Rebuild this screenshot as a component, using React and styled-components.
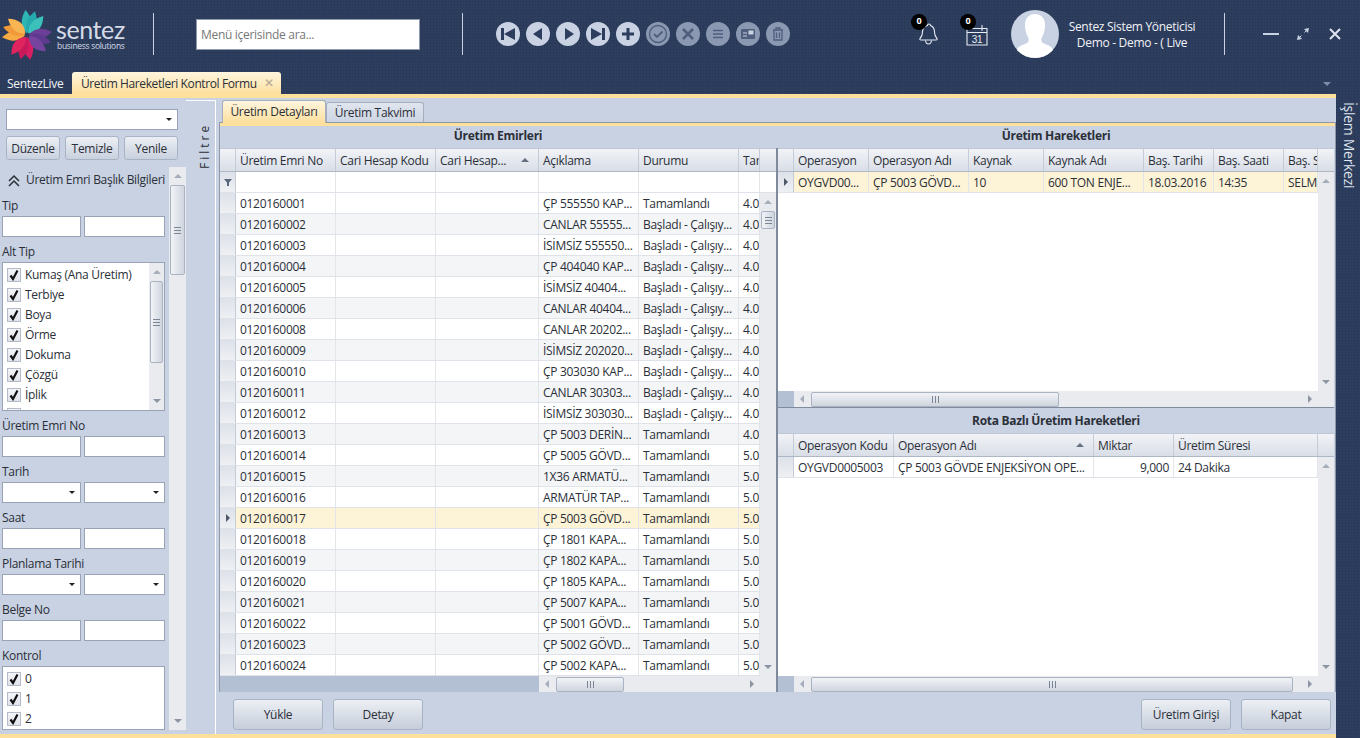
import React from 'react'
import styled, { createGlobalStyle } from 'styled-components'

const GlobalStyle = createGlobalStyle`
  html, body { margin: 0; padding: 0; background: #2d3d5e; }
  * { box-sizing: border-box; }
  body { font-family: "Open Sans", "Noto Sans", sans-serif; font-size: 12px; color: #2b2f38; letter-spacing: -0.3px; }
`

const Page = styled.div`
  width: 1360px;
  height: 738px;
  overflow: hidden;
  display: flex;
  flex-direction: column;
  background-color: #2d3d5e;
  background-image: radial-gradient(#26344f 1px, transparent 1px);
  background-size: 3px 3px;
`

const TopBar = styled.div`
  height: 72px;
  padding-bottom: 4px;
  display: flex;
  align-items: center;
  color: #fff;
`
const LogoBox = styled.div`
  width: 153px;
  padding-left: 2px;
  display: flex;
  align-items: center;
`
const LogoText = styled.div`
  margin-left: 3px;
  color: #d5dbe6;
  line-height: 1;
`
const LogoName = styled.div`
  font-family: "Lato", sans-serif;
  font-size: 25px;
  font-weight: 400;
  letter-spacing: -0.4px;
  line-height: 24px;
`
const LogoSub = styled.div`
  font-size: 8.5px;
  letter-spacing: -0.3px;
  line-height: 10px;
  margin-left: 1px;
`
const Divider = styled.div`
  width: 1px;
  height: 42px;
  background: #c8d2e3;
`
const Search = styled.input`
  width: 224px;
  height: 31px;
  margin: 0 42px;
  border: 1px solid #8e99ad;
  background: #fff;
  padding: 0 4px;
  font: inherit;
  letter-spacing: inherit;
  &::placeholder { color: #777; opacity: 1; }
`
const NavGroup = styled.div`
  display: flex;
  gap: 6px;
  margin-left: 33px;
`
const NavBtn = styled.button`
  width: 24px;
  height: 24px;
  padding: 0;
  border: 0;
  border-radius: 50%;
  background: ${p => (p.$dim ? '#8b98b2' : '#c8d2e3')};
  svg { display: block; }
`
const Notify = styled.div`
  position: relative;
  width: 24px;
  height: 28px;
  margin-left: ${p => p.$gap}px;
`
const Badge = styled.span`
  position: absolute;
  left: -5px;
  top: -6px;
  width: 16px;
  height: 16px;
  border-radius: 50%;
  background: #000;
  color: #fff;
  font-size: 9px;
  font-weight: 700;
  line-height: 14px;
  text-align: center;
  letter-spacing: 0;
`
const Avatar = styled.div`
  width: 48px;
  height: 48px;
  margin-left: 22px;
  border-radius: 50%;
  overflow: hidden;
  background: #c8d2e3;
  flex: none;
`
const UserInfo = styled.div`
  width: 130px;
  margin-left: 8px;
  margin-right: 27px;
  margin-top: 2px;
  text-align: center;
  line-height: 16px;
  color: #f0f2f6;
  white-space: nowrap;
`
const WinBtn = styled.div`
  width: 32px;
  height: 24px;
  display: flex;
  align-items: center;
  justify-content: center;
  margin-left: ${p => p.$left || 0}px;
`

const TabStrip = styled.div`
  height: 22px;
  display: flex;
  align-items: stretch;
  padding-left: 7px;
  padding-right: 29px;
`
const AppTab = styled.div`
  line-height: 24px;
  color: #f2f4f8;
  width: 56px;
  white-space: nowrap;
`
const ActiveAppTab = styled.div`
  line-height: 24px;
  width: 209px;
  margin-left: 9px;
  padding: 0 7px 0 9px;
  display: flex;
  justify-content: space-between;
  white-space: nowrap;
  letter-spacing: -0.4px;
  border-radius: 3px 3px 0 0;
  background: linear-gradient(#fff6df, #fddf9d);
`
const TabClose = styled.span`
  color: #b3a68e;
  font-size: 12px;
  line-height: 22px;
`
const StripMenu = styled.span`
  margin-left: auto;
  align-self: center;
  margin-top: 2px;
  border-left: 4px solid transparent;
  border-right: 4px solid transparent;
  border-top: 4px solid #7f8ca8;
`

const Body = styled.div`
  height: 644px;
  display: flex;
`
const Workspace = styled.div`
  width: 1336px;
  display: flex;
  background: #c8d2e3;
  border-top: 4px solid #fde09c;
  border-bottom: 4px solid #fde09c;
`
const SideRail = styled.div`
  flex: 1;
  writing-mode: vertical-rl;
  padding-top: 8px;
  padding-right: 1px;
  font-size: 14px;
  line-height: 20px;
  color: #dfe4ee;
`

const FilterPanel = styled.div`
  width: 186px;
  flex: none;
  display: flex;
  flex-direction: column;
`
const FilterTop = styled.div`
  padding: 11px 8px 0 6px;
`
const Combo = styled.div`
  height: ${p => p.$h || 21}px;
  display: flex;
  align-items: center;
  justify-content: flex-end;
  padding-right: 5px;
  background: #fff;
  border: 1px solid #98a3b5;
`
const Caret = styled.span`
  border-left: 3px solid transparent;
  border-right: 3px solid transparent;
  border-top: 3px solid #222;
`
const FilterButtons = styled.div`
  display: grid;
  grid-template-columns: 54px 54px 54px;
  justify-content: space-between;
  margin-top: 6px;
`
const SmallBtn = styled.button`
  height: 24px;
  padding: 0;
  font: inherit;
  letter-spacing: inherit;
  color: #2b2f38;
  border: 1px solid #a8b3c5;
  border-radius: 3px;
  background: linear-gradient(#eceff4, #c9d1de);
`
const FormPane = styled.div`
  height: 563px;
  margin-top: 7px;
  display: flex;
`
const FormCol = styled.div`
  width: 169px;
  padding: 0 4px 0 2px;
  overflow: hidden;
`
const Expander = styled.div`
  height: 24px;
  padding: 5px 0 0 5px;
  line-height: 16px;
  display: flex;
  gap: 5px;
  white-space: nowrap;
`
const ExpanderIcon = styled.svg`
  flex: none;
  margin-top: 2px;
`
const Label = styled.div`
  height: 25px;
  padding-top: 7px;
  line-height: 16px;
`
const Pair = styled.div`
  display: grid;
  grid-template-columns: 79px 81px;
  gap: 3px;
`
const TextBox = styled.div`
  height: 21px;
  background: #fff;
  border: 1px solid #98a3b5;
`
const ListBox = styled.div`
  height: ${p => p.$h}px;
  display: flex;
  background: #fff;
  border: 1px solid #98a3b5;
  overflow: hidden;
`
const ListItems = styled.div`
  flex: 1;
  padding: 1px 0 0 4px;
`
const CheckRow = styled.div`
  height: 20px;
  display: flex;
  align-items: center;
  gap: 4px;
  padding-top: 1px;
  line-height: 20px;
`
const CheckBox = styled.span`
  width: 14px;
  height: 14px;
  flex: none;
  background: linear-gradient(#f4f5f8, #dfe3ea);
  border: 1px solid #b5bcc9;
  svg { display: block; }
`

const FiltreBar = styled.div`
  width: 30px;
  flex: none;
  margin-top: 2px;
  border-top: 1px solid #fff;
  border-right: 1px solid #fff;
`
const FiltreText = styled.div`
  writing-mode: vertical-rl;
  transform: rotate(180deg);
  letter-spacing: 3px;
  font-size: 12px;
  line-height: 14px;
  padding-bottom: 19px;
  padding-right: 3px;
  height: 68px;
  margin-left: auto;
  margin-right: 3px;
  color: #2b2f38;
`

const MainArea = styled.div`
  flex: 1;
  min-width: 0;
  padding-left: 3px;
  padding-top: 2px;
  display: flex;
  flex-direction: column;
`
const FormTabs = styled.div`
  height: 22px;
  display: flex;
  align-items: flex-end;
  padding-left: 3px;
`
const FormTab = styled.div`
  height: ${p => (p.$active ? 23 : 20)}px;
  width: ${p => p.$w}px;
  text-align: center;
  line-height: ${p => (p.$active ? '21px' : '19px')};
  margin-bottom: ${p => (p.$active ? '-1px' : '0')};
  position: relative;
  border: 1px solid #a4aebf;
  border-bottom: 0;
  border-radius: 3px 3px 0 0;
  background: ${p => (p.$active ? 'linear-gradient(#fff6df, #fddf9d)' : 'linear-gradient(#e0e5ee, #cdd5e3)')};
`
const TabPanel = styled.div`
  height: 570px;
  display: flex;
  border: 1px solid #8e97a6;
  border-bottom: 0;
  background: #c8d2e3;
  box-shadow: inset 0 3px 0 #fde09c;
  padding-top: 3px;
`
const Pane = styled.div`
  width: ${p => p.$w}px;
  flex: none;
  display: flex;
  flex-direction: column;
`
const Split = styled.div`
  height: 1px;
  background: #7f8a9c;
  flex: none;
`
const Title = styled.div`
  height: ${p => p.$h}px;
  flex: none;
  background: #c8d2e3;
  text-align: center;
  font-weight: 700;
  font-size: 12px;
  line-height: ${p => p.$line}px;
`
const Gutter = styled.div`
  width: 2px;
  flex: none;
  margin-top: 22px;
  background: #7f8a9c;
`
const HeadRow = styled.div`
  height: 24px;
  flex: none;
  display: grid;
  grid-template-columns: ${p => p.$cols} 16px;
  background: linear-gradient(#f1f3f7, #d9dee7);
  border-top: 1px solid #c0c8d6;
  border-bottom: 1px solid #aeb7c6;
`
const HeadCell = styled.div`
  display: flex;
  align-items: center;
  justify-content: space-between;
  padding: 0 0 0 4px;
  border-right: 1px solid #c5ccd8;
  overflow: hidden;
  white-space: nowrap;
  min-width: 0;
`
const SortUp = styled.span`
  flex: none;
  margin-right: 9px;
  border-left: 4px solid transparent;
  border-right: 4px solid transparent;
  border-bottom: 4px solid #66707f;
`
const DataRow = styled.div`
  height: 21px;
  display: grid;
  grid-template-columns: ${p => p.$cols};
  background: ${p => (p.$sel ? '#fdf3d6' : p.$alt ? '#f4f5f7' : '#fff')};
  border-bottom: 1px solid #dfe3e9;
`
const FilterRow = styled(DataRow)`
  flex: none;
  grid-template-columns: ${p => p.$cols} 16px;
`
const RowHead = styled.div`
  display: flex;
  align-items: center;
  justify-content: center;
  background: linear-gradient(#dde1e9, #eef0f3);
  border-right: 1px solid #c5ccd8;
`
const RowMark = styled.span`
  border-top: 4px solid transparent;
  border-bottom: 4px solid transparent;
  border-left: 4px solid #4f5968;
`
const Cell = styled.div`
  padding: 1px 4px 0;
  line-height: 20px;
  overflow: hidden;
  white-space: nowrap;
  text-align: ${p => (p.$right ? 'right' : 'left')};
  border-right: 1px solid #e2e5ea;
  min-width: 0;
`
const GridBody = styled.div`
  flex: ${p => (p.$h ? 'none' : 1)};
  height: ${p => (p.$h ? `${p.$h}px` : 'auto')};
  display: flex;
  overflow: hidden;
  background: #fff;
`
const Rows = styled.div`
  flex: 1;
  min-width: 0;
`

const VBar = styled.div`
  width: ${p => p.$w || 16}px;
  flex: none;
  display: flex;
  flex-direction: column;
  align-items: center;
  background: #e9ebef;
  padding: 0 1px;
`
const ArrowSlot = styled.div`
  height: 18px;
  width: 100%;
  flex: none;
  display: flex;
  align-items: center;
  justify-content: center;
  margin-top: ${p => (p.$end ? 'auto' : 0)};
`
const ArrowUp = styled.span`
  border-left: 4px solid transparent;
  border-right: 4px solid transparent;
  border-bottom: 4px solid #a6aebb;
`
const ArrowDown = styled.span`
  border-left: 4px solid transparent;
  border-right: 4px solid transparent;
  border-top: 4px solid #8d95a3;
`
const VThumb = styled.div`
  width: 100%;
  height: ${p => p.$size}px;
  display: flex;
  align-items: center;
  justify-content: center;
  border: 1px solid #aab3c2;
  border-radius: 2px;
  background: linear-gradient(90deg, #f1f3f6, #cfd5df);
`
const VGrip = styled.span`
  width: 7px;
  height: 7px;
  background: repeating-linear-gradient(#7c8593 0 1px, transparent 1px 3px);
`
const HBarRow = styled.div`
  height: 16px;
  flex: none;
  display: flex;
`
const HBarBlank = styled.div`
  width: ${p => p.$w}px;
  flex: none;
  background: #b3bfd2;
`
const HBar = styled.div`
  flex: 1;
  min-width: 0;
  display: flex;
  align-items: center;
  background: #e9ebef;
  padding-right: ${p => p.$pad}px;
`
const ArrowCell = styled.div`
  width: 16px;
  flex: none;
  display: flex;
  justify-content: center;
  margin-left: ${p => (p.$end ? 'auto' : 0)};
`
const ArrowLeft = styled.span`
  border-top: 4px solid transparent;
  border-bottom: 4px solid transparent;
  border-right: 4px solid #a6aebb;
`
const ArrowRight = styled.span`
  border-top: 4px solid transparent;
  border-bottom: 4px solid transparent;
  border-left: 4px solid #8d95a3;
`
const HThumb = styled.div`
  width: ${p => p.$size}px;
  height: 15px;
  margin-left: 1px;
  display: flex;
  align-items: center;
  justify-content: center;
  border: 1px solid #aab3c2;
  border-radius: 2px;
  background: linear-gradient(#f1f3f6, #cfd5df);
`
const HGrip = styled.span`
  width: 7px;
  height: 7px;
  background: repeating-linear-gradient(90deg, #7c8593 0 1px, transparent 1px 3px);
`

const Footer = styled.div`
  flex: 1;
  display: flex;
  align-items: flex-start;
  padding: 7px 5px 0 14px;
  gap: 10px;
`
const FootBtn = styled.button`
  width: 90px;
  height: 31px;
  padding: 0;
  font: inherit;
  letter-spacing: inherit;
  color: #2b2f38;
  border: 1px solid #a8b3c5;
  border-radius: 3px;
  background: linear-gradient(#eceff4, #c6cedb);
  margin-left: ${p => (p.$push ? 'auto' : 0)};
`

const Logo = () => (
  <svg width="51" height="52" viewBox="0 0 51 52">
    <g transform="translate(25 27)">
      {[
        [-8, '#2fb6b4'], [14, '#25a9ad'], [36, '#3cc0bb'],
        [-100, '#f6ab45'], [-76, '#f09a3a'], [-54, '#f8b551'],
        [168, '#d81e62'], [190, '#c8195a'], [214, '#e0245f'],
        [78, '#6b3f98'], [102, '#5e3a8e'], [126, '#74449f'],
      ].map(([a, c]) => (
        <path key={a} d="M0 -2 C-5 -9 -5 -16 2 -25 C8 -16 8 -9 0 -2Z" fill={c} transform={`rotate(${a})`} />
      ))}
    </g>
  </svg>
)

const NavIcon = ({ name, dim }) => {
  const c = dim ? '#4f5e7d' : '#2d3d5e'
  return (
    <svg width="24" height="24" viewBox="0 0 24 24" fill={c} stroke="none">
      {name === 'first' && <><rect x="5" y="6" width="3" height="12" /><path d="M19 6 8 12l11 6z" /></>}
      {name === 'prev' && <path d="M16 6 7 12l9 6z" />}
      {name === 'play' && <path d="M9 6l9 6-9 6z" />}
      {name === 'next' && <><path d="M5 6l11 6-11 6z" /><rect x="16" y="6" width="3" height="12" /></>}
      {name === 'plus' && <path d="M10.5 6h3v4.5H18v3h-4.5V18h-3v-4.5H6v-3h4.5z" />}
      {name === 'check' && (
        <g fill="none" stroke={c} strokeWidth="1.4">
          <circle cx="12" cy="12" r="8.5" />
          <path d="M8 12l3 3 5.5-5.5" strokeWidth="1.8" />
        </g>
      )}
      {name === 'close' && <path d="M7 7l10 10M17 7 7 17" stroke={c} strokeWidth="2.6" />}
      {name === 'menu' && <path d="M7 8.5h10M7 12h10M7 15.5h10" stroke={c} strokeWidth="1.6" />}
      {name === 'card' && (
        <>
          <rect x="5" y="7" width="14" height="10" rx="1" />
          <rect x="12.5" y="8.5" width="5" height="4" fill="#c8d2e3" />
          <path d="M7 11h4M7 14h4" stroke="#c8d2e3" strokeWidth="1" />
        </>
      )}
      {name === 'trash' && (
        <g fill="none" stroke={c} strokeWidth="1.3">
          <path d="M7 8h10M10 8V6h4v2M8 8v10h8V8M10.5 10.5v5.5M13.5 10.5v5.5" />
        </g>
      )}
    </svg>
  )
}

const Bell = () => (
  <svg width="24" height="28" viewBox="0 0 24 28" fill="none" stroke="#e8ecf3" strokeWidth="1.1">
    <path d="M13 4c1 0 1.500.6 1.500 1.500 2.500 1 4 3.500 4 6.500 0 3 .5 4.500 2.500 6.500.6.8 0 1.500-1 1.500H5c-1 0-1.600-.7-1-1.500 2-2 2.500-3.500 2.500-6.500 0-3 1.500-5.500 5-6.500C11.500 4.600 12 4 13 4z" />
    <path d="M9.500 20.500c.3 2.500 1.700 3.500 3 3.500s2.700-1 3-3.500" />
  </svg>
)

const Calendar = () => (
  <svg width="24" height="28" viewBox="0 0 24 28" fill="none" stroke="#e8ecf3" strokeWidth="1.1">
    <path d="M2 8.500h20V25H2zM2 12.500h20M17 5v6" />
    <text x="12" y="23" textAnchor="middle" fontSize="10" fill="#e8ecf3" stroke="none" fontFamily="Liberation Sans">31</text>
  </svg>
)

const Silhouette = () => (
  <svg width="48" height="48" viewBox="0 0 48 48">
    <path d="M24 4c6 0 10 4 10 11 0 5-1 9-3 12-1 2-1 5 1 6 4 2 9 3 10 7l1 8H5l1-8c1-4 6-5 10-7 2-1 2-4 1-6-2-3-3-7-3-12 0-7 4-11 10-11z" fill="#fff" />
  </svg>
)

const Check = () => (
  <svg width="12" height="12" viewBox="0 0 12 12">
    <path d="M2.500 6.500 5 10l4.500-8.500" fill="none" stroke="#111" strokeWidth="2.200" />
  </svg>
)

const Funnel = () => (
  <svg width="8" height="8" viewBox="0 0 8 8"><path d="M0 1h8L5 4.500V8H3V4.500z" fill="#59677d" /></svg>
)

const Chevrons = () => (
  <ExpanderIcon width="14" height="14" viewBox="0 0 14 14" fill="none" stroke="#2b2f38" strokeWidth="1.500">
    <path d="M2 7l5-5 5 5M2 12l5-5 5 5" />
  </ExpanderIcon>
)

const VScroll = ({ w, size }) => (
  <VBar $w={w}>
    <ArrowSlot><ArrowUp /></ArrowSlot>
    {size && <VThumb $size={size}><VGrip /></VThumb>}
    <ArrowSlot $end><ArrowDown /></ArrowSlot>
  </VBar>
)

const HScroll = ({ blank, size, pad }) => (
  <HBarRow>
    <HBarBlank $w={blank} />
    <HBar $pad={pad}>
      <ArrowCell><ArrowLeft /></ArrowCell>
      <HThumb $size={size}><HGrip /></HThumb>
      <ArrowCell $end><ArrowRight /></ArrowCell>
    </HBar>
  </HBarRow>
)

const GridHead = ({ cols, items, sort }) => (
  <HeadRow $cols={cols}>
    <HeadCell />
    {items.map((t, i) => (
      <HeadCell key={t}>{t}{sort === i && <SortUp />}</HeadCell>
    ))}
    <div />
  </HeadRow>
)

const navItems = [
  ['first'], ['prev'], ['play'], ['next'], ['plus'],
  ['check', true], ['close', true], ['menu', true], ['card', true], ['trash', true],
]

const altTypes = ['Kumaş (Ana Üretim)', 'Terbiye', 'Boya', 'Örme', 'Dokuma', 'Çözgü', 'İplik', '']

const BUSY = 'Başladı - Çalışıy...'
const DONE = 'Tamamlandı'
const orders = [
  ['0120160001', 'ÇP 555550 KAP...', DONE, '4.0'],
  ['0120160002', 'CANLAR 55555...', BUSY, '4.0'],
  ['0120160003', 'İSİMSİZ 555550...', BUSY, '4.0'],
  ['0120160004', 'ÇP 404040 KAP...', BUSY, '4.0'],
  ['0120160005', 'İSİMSİZ 40404...', BUSY, '4.0'],
  ['0120160006', 'CANLAR 40404...', BUSY, '4.0'],
  ['0120160008', 'CANLAR 20202...', BUSY, '4.0'],
  ['0120160009', 'İSİMSİZ 202020...', BUSY, '4.0'],
  ['0120160010', 'ÇP 303030 KAP...', BUSY, '4.0'],
  ['0120160011', 'CANLAR 30303...', BUSY, '4.0'],
  ['0120160012', 'İSİMSİZ 303030...', BUSY, '4.0'],
  ['0120160013', 'ÇP 5003 DERİN...', DONE, '4.0'],
  ['0120160014', 'ÇP 5005 GÖVD...', DONE, '5.0'],
  ['0120160015', '1X36 ARMATÜ...', DONE, '5.0'],
  ['0120160016', 'ARMATÜR TAP...', DONE, '5.0'],
  ['0120160017', 'ÇP 5003 GÖVD...', DONE, '5.0'],
  ['0120160018', 'ÇP 1801 KAPA...', DONE, '5.0'],
  ['0120160019', 'ÇP 1802 KAPA...', DONE, '5.0'],
  ['0120160020', 'ÇP 1805 KAPA...', DONE, '5.0'],
  ['0120160021', 'ÇP 5007 KAPA...', DONE, '5.0'],
  ['0120160022', 'ÇP 5001 GÖVD...', DONE, '5.0'],
  ['0120160023', 'ÇP 5002 GÖVD...', DONE, '5.0'],
  ['0120160024', 'ÇP 5002 KAPA...', DONE, '5.0'],
]

const orderCols = '16px 100px 100px 103px 100px 100px 21px'
const moveCols = '16px 75px 100px 75px 100px 70px 70px 34px'
const routeCols = '16px 100px 200px 80px 144px'

const App = () => {
  return (
    <Page>
      <GlobalStyle />
      <TopBar>
        <LogoBox>
          <Logo />
          <LogoText>
            <LogoName>sentez</LogoName>
            <LogoSub>business solutions</LogoSub>
          </LogoText>
        </LogoBox>
        <Divider />
        <Search placeholder="Menü içerisinde ara..." />
        <Divider />
        <NavGroup>
          {navItems.map(([name, dim]) => (
            <NavBtn key={name} $dim={dim}><NavIcon name={name} dim={dim} /></NavBtn>
          ))}
        </NavGroup>
        <Notify $gap={126}><Bell /><Badge>0</Badge></Notify>
        <Notify $gap={25}><Calendar /><Badge>0</Badge></Notify>
        <Avatar><Silhouette /></Avatar>
        <UserInfo>
          <div>Sentez Sistem Yöneticisi</div>
          <div>Demo - Demo - ( Live</div>
        </UserInfo>
        <Divider />
        <WinBtn $left={30}>
          <svg width="16" height="4" viewBox="0 0 16 4"><path d="M0 2h16" stroke="#c8d2e3" strokeWidth="2" /></svg>
        </WinBtn>
        <WinBtn>
          <svg width="14" height="14" viewBox="0 0 14 14" fill="#c8d2e3">
            <path d="M13 1l-1 5-4-4zM1 13l1-5 4 4z" />
            <path d="M11 3 8.500 5.500M3 11l2.500-2.500" stroke="#c8d2e3" strokeWidth="1" />
          </svg>
        </WinBtn>
        <WinBtn>
          <svg width="14" height="14" viewBox="0 0 14 14"><path d="M2 2l10 10M12 2 2 12" stroke="#dfe4ee" strokeWidth="2" /></svg>
        </WinBtn>
      </TopBar>

      <TabStrip>
        <AppTab>SentezLive</AppTab>
        <ActiveAppTab>
          Üretim Hareketleri Kontrol Formu
          <TabClose>✕</TabClose>
        </ActiveAppTab>
        <StripMenu />
      </TabStrip>

      <Body>
        <Workspace>
          <FilterPanel>
            <FilterTop>
              <Combo><Caret /></Combo>
              <FilterButtons>
                <SmallBtn>Düzenle</SmallBtn>
                <SmallBtn>Temizle</SmallBtn>
                <SmallBtn>Yenile</SmallBtn>
              </FilterButtons>
            </FilterTop>
            <FormPane>
              <FormCol>
                <Expander><Chevrons />Üretim Emri Başlık Bilgileri</Expander>
                <Label>Tip</Label>
                <Pair><TextBox /><TextBox /></Pair>
                <Label>Alt Tip</Label>
                <ListBox $h={149}>
                  <ListItems>
                    {altTypes.map((t, i) => (
                      <CheckRow key={i}><CheckBox><Check /></CheckBox>{t}</CheckRow>
                    ))}
                  </ListItems>
                  <VScroll w={15} size={82} />
                </ListBox>
                <Label>Üretim Emri No</Label>
                <Pair><TextBox /><TextBox /></Pair>
                <Label>Tarih</Label>
                <Pair><Combo><Caret /></Combo><Combo><Caret /></Combo></Pair>
                <Label>Saat</Label>
                <Pair><TextBox /><TextBox /></Pair>
                <Label>Planlama Tarihi</Label>
                <Pair><Combo><Caret /></Combo><Combo><Caret /></Combo></Pair>
                <Label>Belge No</Label>
                <Pair><TextBox /><TextBox /></Pair>
                <Label>Kontrol</Label>
                <ListBox $h={64}>
                  <ListItems>
                    {['0', '1', '2'].map(t => (
                      <CheckRow key={t}><CheckBox><Check /></CheckBox>{t}</CheckRow>
                    ))}
                  </ListItems>
                </ListBox>
              </FormCol>
              <VScroll w={17} size={90} />
            </FormPane>
          </FilterPanel>

          <FiltreBar>
            <FiltreText>Filtre</FiltreText>
          </FiltreBar>

          <MainArea>
            <FormTabs>
              <FormTab $active $w={104}>Üretim Detayları</FormTab>
              <FormTab $w={98}>Üretim Takvimi</FormTab>
            </FormTabs>
            <TabPanel>
              <Pane $w={556}>
                <Title $h={22} $line={19}>Üretim Emirleri</Title>
                <GridHead
                  cols={orderCols}
                  sort={2}
                  items={['Üretim Emri No', 'Cari Hesap Kodu', 'Cari Hesap...', 'Açıklama', 'Durumu', 'Tar']}
                />
                <FilterRow $cols={orderCols}>
                  <RowHead><Funnel /></RowHead>
                  <Cell /><Cell /><Cell /><Cell /><Cell /><Cell /><div />
                </FilterRow>
                <GridBody>
                  <Rows>
                    {orders.map((o, i) => (
                      <DataRow key={o[0]} $cols={orderCols} $alt={i % 2 === 1} $sel={o[0] === '0120160017'}>
                        <RowHead>{o[0] === '0120160017' && <RowMark />}</RowHead>
                        <Cell>{o[0]}</Cell>
                        <Cell />
                        <Cell />
                        <Cell>{o[1]}</Cell>
                        <Cell>{o[2]}</Cell>
                        <Cell>{o[3]}</Cell>
                      </DataRow>
                    ))}
                  </Rows>
                  <VScroll size={18} />
                </GridBody>
                <HScroll blank={319} size={68} pad={16} />
              </Pane>
              <Gutter />
              <Pane $w={556}>
                <Title $h={22} $line={19}>Üretim Hareketleri</Title>
                <GridHead
                  cols={moveCols}
                  items={['Operasyon', 'Operasyon Adı', 'Kaynak', 'Kaynak Adı', 'Baş. Tarihi', 'Baş. Saati', 'Baş. S']}
                />
                <GridBody $h={219}>
                  <Rows>
                    <DataRow $cols={moveCols} $sel>
                      <RowHead><RowMark /></RowHead>
                      <Cell>OYGVD00...</Cell>
                      <Cell>ÇP 5003 GÖVD...</Cell>
                      <Cell>10</Cell>
                      <Cell>600 TON ENJE...</Cell>
                      <Cell>18.03.2016</Cell>
                      <Cell>14:35</Cell>
                      <Cell>SELM</Cell>
                    </DataRow>
                  </Rows>
                  <VScroll />
                </GridBody>
                <HScroll blank={16} size={248} pad={16} />
                <Split />
                <Title $h={25} $line={26}>Rota Bazlı Üretim Hareketleri</Title>
                <GridHead
                  cols={routeCols}
                  sort={1}
                  items={['Operasyon Kodu', 'Operasyon Adı', 'Miktar', 'Üretim Süresi']}
                />
                <GridBody $h={219}>
                  <Rows>
                    <DataRow $cols={routeCols}>
                      <RowHead />
                      <Cell>OYGVD0005003</Cell>
                      <Cell>ÇP 5003 GÖVDE ENJEKSİYON OPE...</Cell>
                      <Cell $right>9,000</Cell>
                      <Cell>24 Dakika</Cell>
                    </DataRow>
                  </Rows>
                  <VScroll />
                </GridBody>
                <HScroll blank={16} size={482} pad={16} />
              </Pane>
            </TabPanel>
            <Footer>
              <FootBtn>Yükle</FootBtn>
              <FootBtn>Detay</FootBtn>
              <FootBtn $push>Üretim Girişi</FootBtn>
              <FootBtn>Kapat</FootBtn>
            </Footer>
          </MainArea>
        </Workspace>
        <SideRail>İşlem Merkezi</SideRail>
      </Body>
    </Page>
  )
}

export default App
